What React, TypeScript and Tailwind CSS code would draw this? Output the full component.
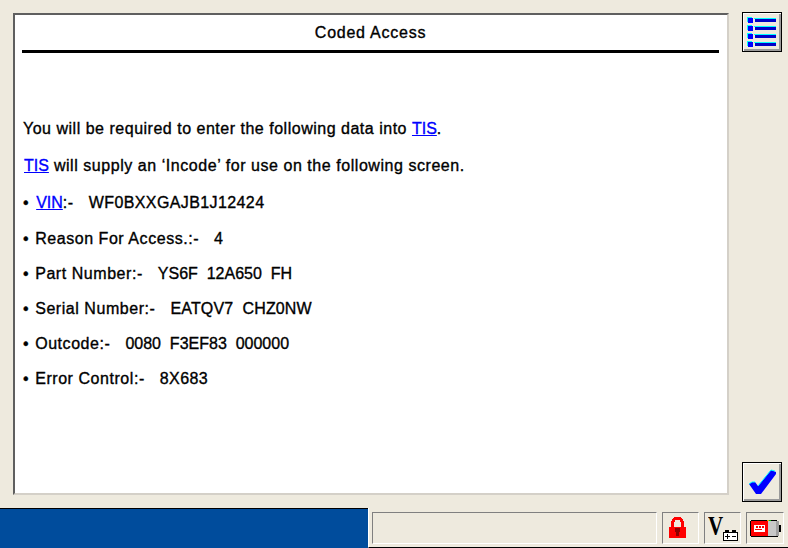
import React from 'react';

const Link: React.FC<{ children: React.ReactNode }> = ({ children }) => (
  <span className="text-[#0000ff] underline tracking-normal">{children}</span>
);

const Bullet = () => <span className="mr-px">• </span>;

const rows: { label: React.ReactNode; value: string; gap: string; spacing: string }[] = [
  { label: <><span className="ml-px" /><Link>VIN</Link>:-</>, value: 'WF0BXXGAJB1J12424', gap: 'mb-[18px]', spacing: 'tracking-[0.4px]' },
  { label: 'Reason For Access.:-', value: '4', gap: 'mb-[17px]', spacing: 'tracking-normal' },
  { label: 'Part Number:-', value: 'YS6F  12A650  FH', gap: 'mb-[17px]', spacing: 'tracking-normal' },
  { label: 'Serial Number:-', value: 'EATQV7  CHZ0NW', gap: 'mb-[17px]', spacing: 'tracking-[0.15px]' },
  { label: 'Outcode:-', value: '0080  F3EF83  000000', gap: 'mb-[17px]', spacing: 'tracking-normal' },
  { label: 'Error Control:-', value: '8X683', gap: 'mb-0', spacing: 'tracking-[0.4px]' },
];

const ListIcon = () => (
  <svg width="32" height="32" viewBox="0 0 32 32" shapeRendering="crispEdges">
    {[0, 8, 16, 24].map((y) => (
      <g key={y}>
        <rect x="1" y={y + 1} width="5" height="1" fill="#00ffff" />
        <rect x="1" y={y + 1} width="1" height="5" fill="#00ffff" />
        <rect x="2" y={y + 2} width="5" height="5" fill="#0000ff" />
        <rect x="8" y={y + 2} width="22" height="1" fill="#00ffff" />
        <rect x="9" y={y + 3} width="21" height="3" fill="#0000c8" />
      </g>
    ))}
  </svg>
);

const CheckIcon = () => (
  <svg width="32" height="32" viewBox="0 0 32 32">
    <path d="M3 18 L6 16 L9 16 L12 20 L25 4 L30 6 L30 8 L15 28 L10 28 Z" fill="#0000ff" />
    <path d="M3 18 L6 16 L9 16 M12 20 L25 4 L29 5" fill="none" stroke="#00ffff" strokeWidth="1" />
  </svg>
);

const LockIcon = () => (
  <svg width="17" height="21" viewBox="0 0 17 21" shapeRendering="crispEdges">
    <path d="M3.5 10 V5 L6 1.5 H11 L13.5 5 V10" fill="none" stroke="#ff0000" strokeWidth="3" />
    <rect x="0" y="10" width="17" height="11" fill="#ff0000" />
    <rect x="6" y="11" width="5" height="4" fill="#900000" />
    <rect x="7" y="14" width="3" height="5" fill="#900000" />
  </svg>
);

const BatteryVoltIcon = () => (
  <div className="relative w-[31px] h-[27px]">
    <span className="absolute left-0 top-[-5px] font-['Liberation_Serif',serif] font-bold text-[28px] leading-[30px] text-black scale-x-[0.75] origin-left">
      V
    </span>
    <svg className="absolute left-[15px] top-[14px]" width="15" height="12" viewBox="0 0 15 12" shapeRendering="crispEdges">
      <rect x="0.5" y="2.5" width="14" height="8" fill="#ffffff" stroke="#000" />
      <rect x="2" y="0" width="4" height="2" fill="#000" />
      <rect x="9" y="0" width="4" height="2" fill="#000" />
      <rect x="2" y="6" width="5" height="1" fill="#000" />
      <rect x="4" y="4" width="1" height="5" fill="#000" />
      <rect x="9" y="6" width="4" height="1" fill="#000" />
    </svg>
  </div>
);

const ModuleIcon = () => (
  <svg width="32" height="19" viewBox="0 0 32 19" shapeRendering="crispEdges">
    <rect x="1" y="2" width="17" height="15" fill="#ff0000" />
    <rect x="18" y="2" width="8" height="15" fill="#c8c8c8" />
    <rect x="26" y="2" width="3" height="15" fill="#a0a0a0" />
    <rect x="1" y="1" width="26" height="1" fill="#000" />
    <rect x="1" y="17" width="27" height="1" fill="#000" />
    <rect x="0" y="2" width="1" height="15" fill="#000" />
    <rect x="17" y="1" width="2" height="1" fill="#e8a000" />
    <rect x="19" y="1" width="2" height="1" fill="#00c000" />
    <rect x="29" y="6" width="2" height="7" fill="#000" />
    <rect x="4" y="6" width="11" height="7" fill="#ffffff" />
    <rect x="6" y="7" width="2" height="2" fill="#ff0000" />
    <rect x="9" y="7" width="2" height="2" fill="#ff0000" />
    <rect x="12" y="7" width="2" height="2" fill="#ff0000" />
    <rect x="5" y="10" width="7" height="1" fill="#ff0000" />
  </svg>
);

const RaisedButton: React.FC<{ children: React.ReactNode }> = ({ children }) => (
  <button className="w-10 h-10 flex items-center justify-center bg-[#eeeade] border border-black shadow-[inset_1px_1px_0_#ffffff,inset_-2px_-2px_0_#9a9a9a]">
    {children}
  </button>
);

const StatusCell: React.FC<{ className: string; children: React.ReactNode }> = ({ className, children }) => (
  <div className={`h-[32px] flex items-start border border-t-[#808080] border-l-[#808080] border-r-white border-b-white ${className}`}>
    {children}
  </div>
);

export default function App() {
  return (
    <div className="w-[788px] h-[548px] flex flex-col bg-[#eeeade] font-['Liberation_Sans',Arial,sans-serif] overflow-hidden">
      <div className="flex flex-1 pt-[12px] pl-[13px] pr-[6px] justify-between">
        <main className="mt-px w-[716px] h-[482px] bg-white border-2 border-t-[#5f5f5f] border-l-[#5f5f5f] border-r-[#d4d0c8] border-b-[#d4d0c8] pl-[7px] pr-2 text-black text-base [-webkit-text-stroke:0.35px_currentColor]">
          <h1 className="h-[38px] border-b-[3px] border-black flex items-center justify-center text-base leading-none tracking-[0.75px]">
            Coded Access
          </h1>
          <div className="mt-[67px] pl-px flex flex-col leading-[18px] whitespace-pre tracking-[0.55px]">
            <p className="mb-[19px] tracking-[0.51px]">You will be required to enter the following data into <Link>TIS</Link>.</p>
            <p className="mb-[19px] pl-px"><Link>TIS</Link> will supply an ‘Incode’ for use on the following screen.</p>
            {rows.map((row, i) => (
              <p key={i} className={row.gap}>
                <Bullet />{row.label}   <span className={row.spacing}>{row.value}</span>
              </p>
            ))}
          </div>
        </main>
        <aside className="flex flex-col justify-between h-[490px]">
          <RaisedButton><ListIcon /></RaisedButton>
          <RaisedButton><CheckIcon /></RaisedButton>
        </aside>
      </div>
      <footer className="h-10 flex">
        <div className="w-[368px] h-10 bg-[#004c9c] border-t border-black" />
        <div className="flex-1 flex items-start gap-[5px] pl-[3px] pt-1 border-l border-white border-b border-b-black">
          <div className="w-[285px] h-[32px] border border-t-[#808080] border-l-[#808080] border-r-white border-b-white" />
          <StatusCell className="w-[37px] pl-[6px] pt-[4px]"><LockIcon /></StatusCell>
          <StatusCell className="w-[37px] pl-[3px] pt-[3px]"><BatteryVoltIcon /></StatusCell>
          <StatusCell className="w-[38px] pl-[3px] pt-[6px]"><ModuleIcon /></StatusCell>
        </div>
      </footer>
    </div>
  );
}
